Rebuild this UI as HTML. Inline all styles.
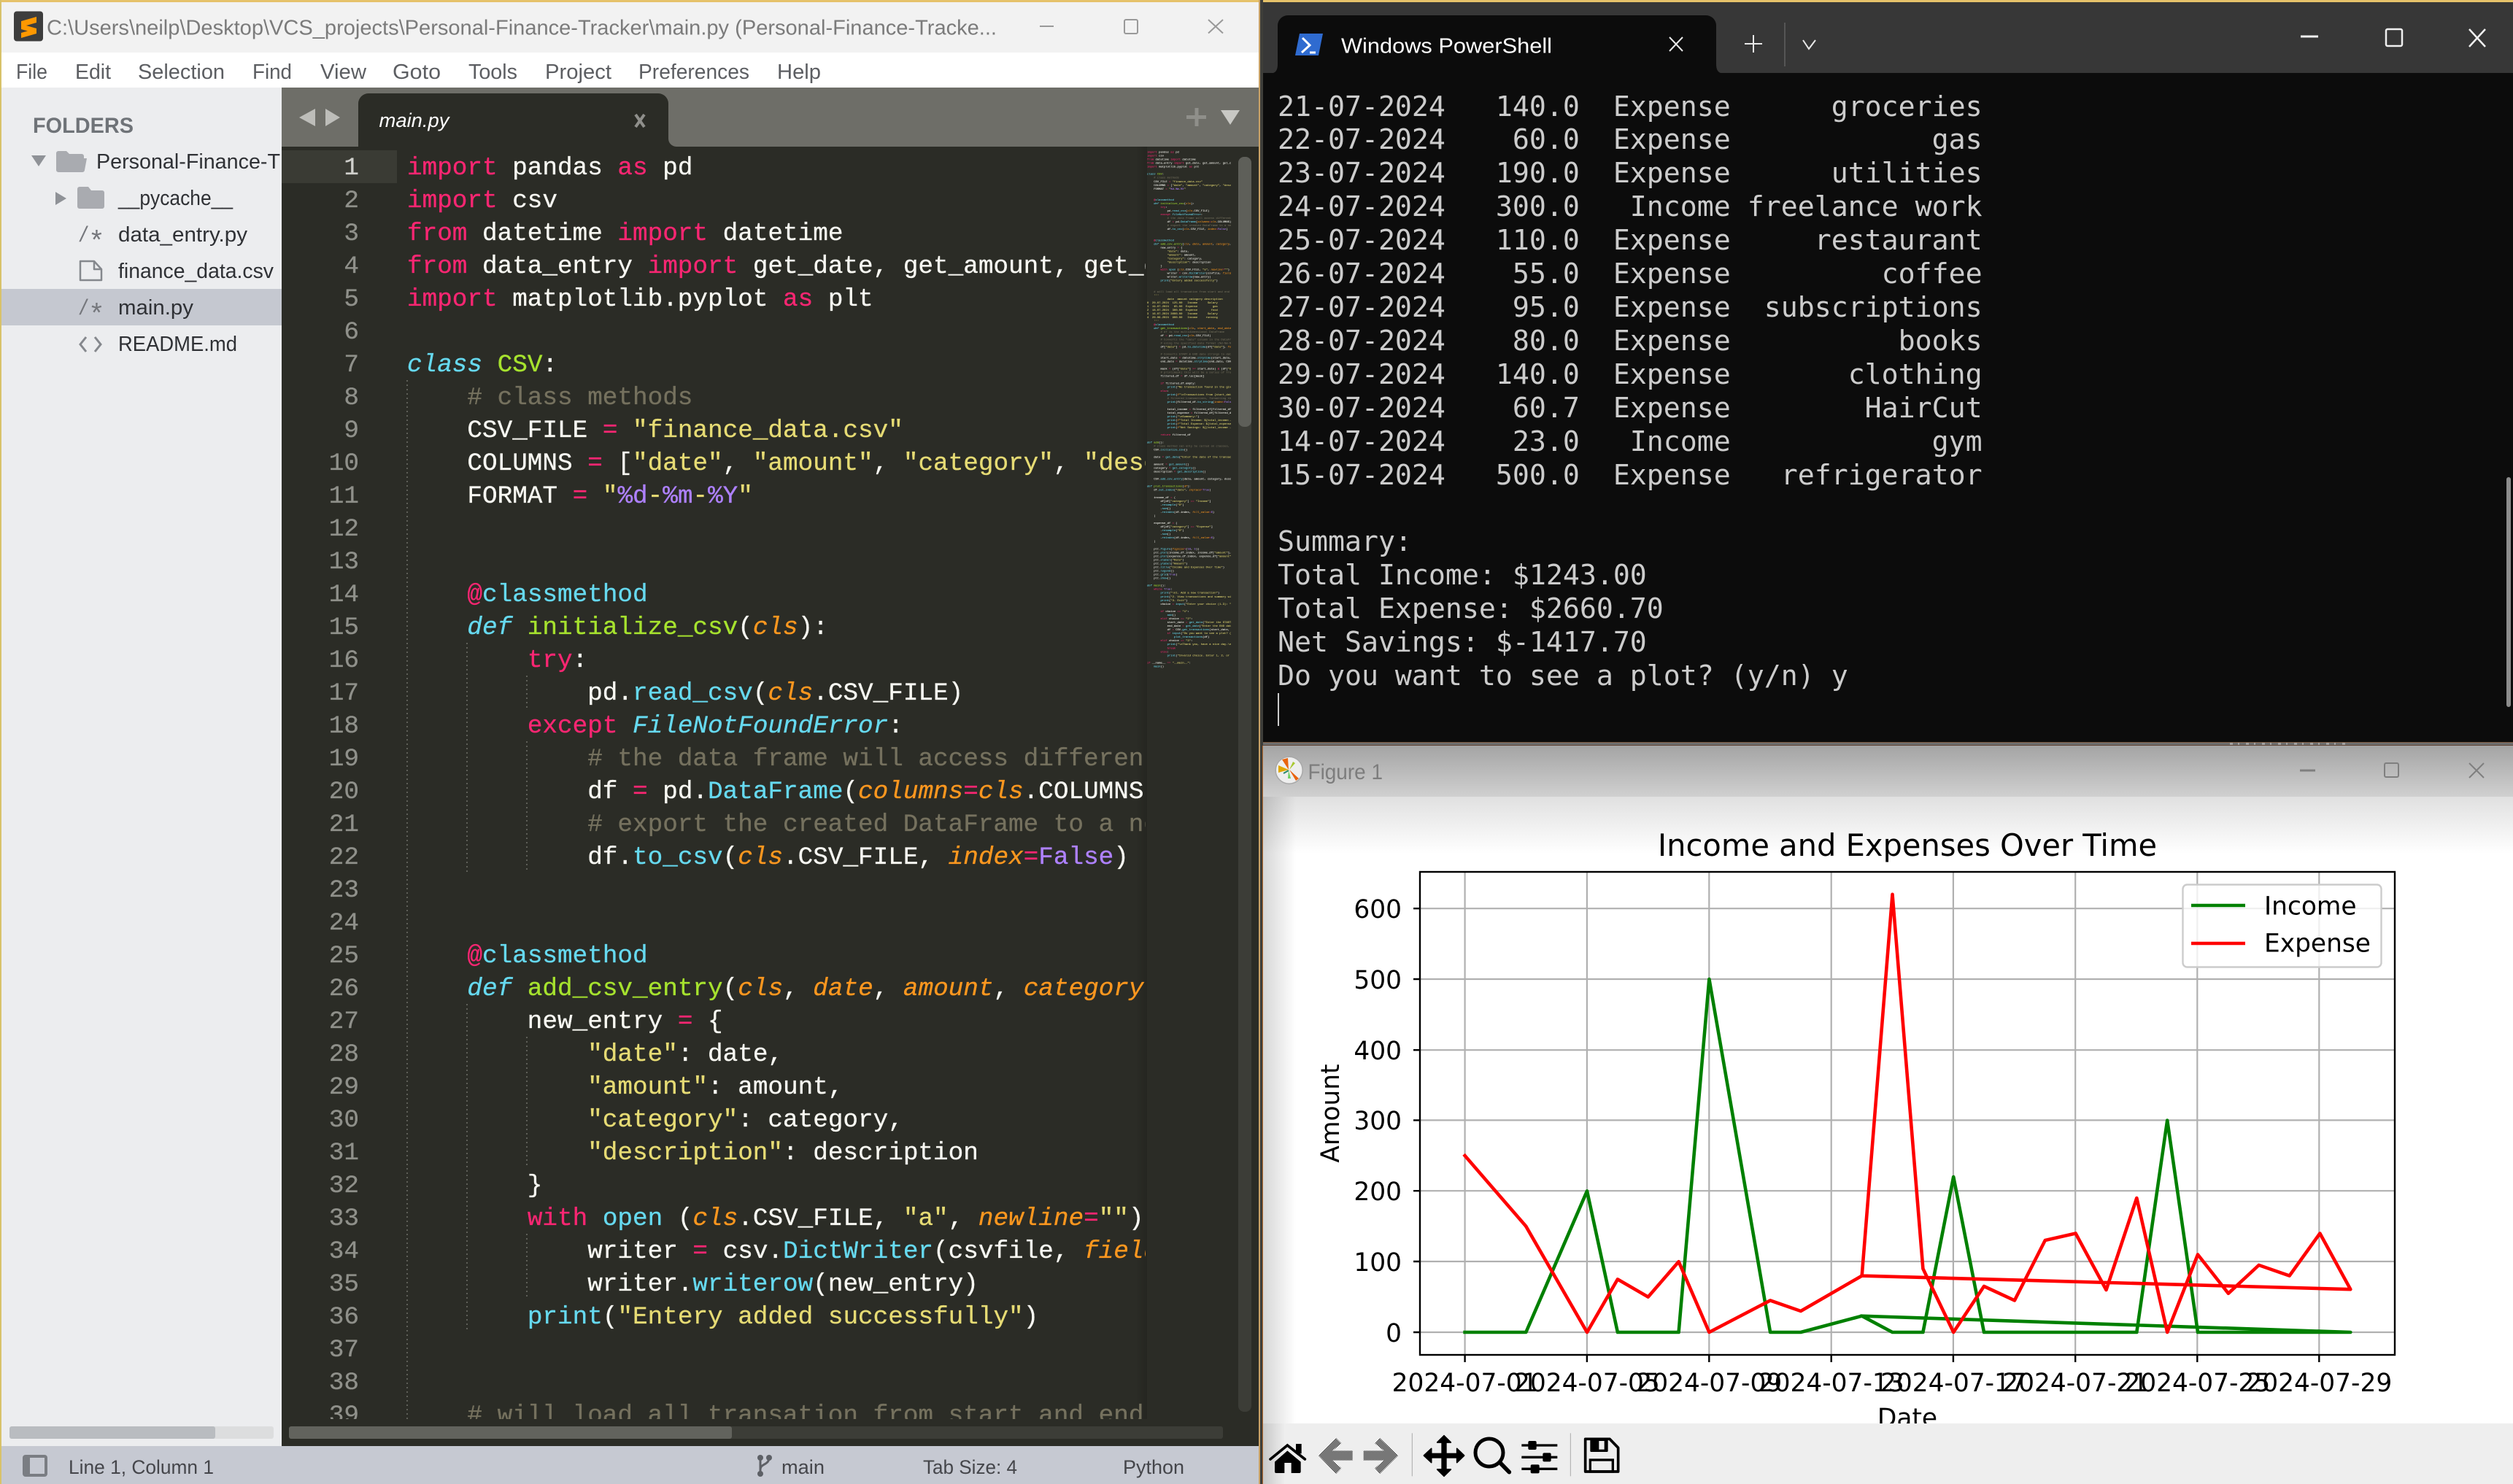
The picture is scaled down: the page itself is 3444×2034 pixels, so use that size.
<!DOCTYPE html>
<html lang="en"><head><meta charset="utf-8"><title>Screenshot</title>
<style>
html,body{margin:0;padding:0;width:3444px;height:2034px;overflow:hidden;background:#333}
svg.base{position:absolute;left:0;top:0}
.ui{font-family:"Liberation Sans",sans-serif}
.mpl{font-family:"DejaVu Sans",sans-serif;font-size:34.4px;fill:#000}
pre{margin:0;font-family:"Liberation Mono",monospace}
.clip{position:absolute;overflow:hidden}
.code{font-size:34.33px;line-height:45px;color:#f8f8f2;white-space:pre;-webkit-text-stroke:.3px currentColor}
.code i{font-style:normal}
.k{color:#f92672}.s{color:#e6db74}.c{color:#75715e}.f{color:#66d9ef}
.code i.fi{color:#66d9ef;font-style:italic}.g{color:#a6e22e}
.code i.a{color:#fd971f;font-style:italic}.n{color:#ae81ff}
.gut{font-size:34.33px;line-height:45px;color:#8f908a;text-align:right;-webkit-text-stroke:.3px currentColor}
.term{font-family:"DejaVu Sans Mono",monospace;font-size:38.2px;line-height:45.92px;color:#cccccc;white-space:pre}
</style></head><body>
<svg class="base" width="3444" height="2034" viewBox="0 0 3444 2034" xmlns="http://www.w3.org/2000/svg">
<defs>
<linearGradient id="ftb" x1="0" y1="0" x2="0" y2="1"><stop offset="0" stop-color="#a4a4a4"/><stop offset="1" stop-color="#d0d0d0"/></linearGradient>
<linearGradient id="fct" x1="0" y1="0" x2="0" y2="1"><stop offset="0" stop-color="#e0e0e0"/><stop offset="1" stop-color="#ffffff"/></linearGradient>
<linearGradient id="fleft" x1="0" y1="0" x2="1" y2="0"><stop offset="0" stop-color="#000" stop-opacity=".16"/><stop offset="1" stop-color="#000" stop-opacity="0"/></linearGradient>
<linearGradient id="mshadow" x1="0" y1="0" x2="1" y2="0"><stop offset="0" stop-color="#000" stop-opacity="0"/><stop offset="1" stop-color="#000" stop-opacity=".14"/></linearGradient>
<pattern id="dither" width="6" height="6" patternUnits="userSpaceOnUse"><rect width="3" height="3" fill="#000"/><rect x="3" y="3" width="3" height="3" fill="#000"/></pattern>
<clipPath id="axclip"><rect x="1946" y="1195" width="1336" height="662"/></clipPath>
</defs>

<!-- window frame background -->
<rect width="3444" height="2034" fill="#3a3a36"/>
<rect x="0" y="0" width="3444" height="3" fill="#e6c26a"/>

<!-- SUBLIME WINDOW -->
<rect x="0" y="0" width="2" height="2034" fill="#d8c26a"/>
<rect x="2" y="3" width="1723" height="69" fill="#f2f2f2"/>
<rect x="2" y="72" width="1723" height="48" fill="#ffffff"/>
<rect x="2" y="120" width="384" height="1862" fill="#ecedef"/>
<rect x="386" y="120" width="1339" height="81" fill="#6e6e68"/>
<rect x="386" y="201" width="1339" height="1781" fill="#2b2c26"/>
<rect x="2" y="1982" width="1723" height="52" fill="#c6c9d2"/>
<rect x="1725" y="0" width="2" height="2034" fill="#c9a266"/>

<!-- Sublime icon -->
<rect x="19" y="15.5" width="40" height="41" rx="4" fill="#3d3d3d"/>
<path d="M29,29 L50,23 V31 L29,37 Z M29,33 L50,39 V46 L29,40 Z M29,45 L50,39 V46 L29,52 Z" fill="#ff9800"/>
<text class="ui" x="64" y="47.5" font-size="29" fill="#7b7b7b" textLength="1302" lengthAdjust="spacingAndGlyphs">C:\Users\neilp\Desktop\VCS_projects\Personal-Finance-Tracker\main.py (Personal-Finance-Tracke...</text>
<path d="M1425,36 H1444" stroke="#999" stroke-width="2"/>
<rect x="1541" y="27" width="18" height="19" rx="2" fill="none" stroke="#999" stroke-width="2"/>
<path d="M1656,27 L1676,45.5 M1676,27 L1656,45.5" stroke="#999" stroke-width="2"/>

<!-- Menu -->
<g class="ui" font-size="29" fill="#5c5e62">
<text x="22" y="108" textLength="43" lengthAdjust="spacingAndGlyphs">File</text>
<text x="103" y="108" textLength="49" lengthAdjust="spacingAndGlyphs">Edit</text>
<text x="189" y="108" textLength="119" lengthAdjust="spacingAndGlyphs">Selection</text>
<text x="346" y="108" textLength="54" lengthAdjust="spacingAndGlyphs">Find</text>
<text x="439" y="108" textLength="63" lengthAdjust="spacingAndGlyphs">View</text>
<text x="538" y="108" textLength="66" lengthAdjust="spacingAndGlyphs">Goto</text>
<text x="642" y="108" textLength="67" lengthAdjust="spacingAndGlyphs">Tools</text>
<text x="747" y="108" textLength="91" lengthAdjust="spacingAndGlyphs">Project</text>
<text x="875" y="108" textLength="152" lengthAdjust="spacingAndGlyphs">Preferences</text>
<text x="1065" y="108" textLength="60" lengthAdjust="spacingAndGlyphs">Help</text>
</g>

<!-- Sidebar -->
<rect x="2" y="396" width="384" height="50" fill="#c5c8d0"/>
<text class="ui" x="45" y="182" font-size="30" font-weight="bold" fill="#6f7378" textLength="138" lengthAdjust="spacingAndGlyphs">FOLDERS</text>
<g class="ui" font-size="29" fill="#2f3135">
<text x="132" y="231" textLength="252" lengthAdjust="spacingAndGlyphs">Personal-Finance-T</text>
<text x="162" y="281" textLength="157" lengthAdjust="spacingAndGlyphs">__pycache__</text>
<text x="162" y="331" textLength="177" lengthAdjust="spacingAndGlyphs">data_entry.py</text>
<text x="162" y="381" textLength="213" lengthAdjust="spacingAndGlyphs">finance_data.csv</text>
<text x="162" y="431" textLength="103" lengthAdjust="spacingAndGlyphs">main.py</text>
<text x="162" y="481" textLength="163" lengthAdjust="spacingAndGlyphs">README.md</text>
</g>
<path d="M43,213 H63 L53,228 Z" fill="#8f9297"/>
<path d="M77,210 a3,3 0 0 1 3,-3 h11 l4,4 h17 a3,3 0 0 1 3,3 v3 h4 l-3,16 a3,3 0 0 1 -3,3 h-33 a3,3 0 0 1 -3,-3 Z" fill="#a9abb0"/>
<path d="M76,263 L91,272 L76,281 Z" fill="#8f9297"/>
<path d="M106,259 a3,3 0 0 1 3,-3 h12 l4,5 h15 a3,3 0 0 1 3,3 v19 a3,3 0 0 1 -3,3 h-31 a3,3 0 0 1 -3,-3 Z" fill="#a9abb0"/>
<g class="ui" fill="#75777c">
<text x="110" y="331" font-size="30" font-style="italic">/</text><text x="125" y="341" font-size="38">*</text>
<text x="110" y="431" font-size="30" font-style="italic">/</text><text x="125" y="441" font-size="38">*</text>
</g>
<path d="M110,358 H129 L139,369 V384 H110 Z M129,358 V369 H139" fill="none" stroke="#85888d" stroke-width="2.5" stroke-linejoin="round"/>
<path d="M118,462 L110,472 L118,482 M130,462 L138,472 L130,482" fill="none" stroke="#85888d" stroke-width="3"/>

<!-- Tab bar -->
<path d="M491,201 V142 a14,14 0 0 1 14,-14 H902 a14,14 0 0 1 14,14 V190 a11,11 0 0 0 11,11 Z" fill="#2b2c26"/>
<path d="M432,149 V173 L410,161 Z M446,149 V173 L466,161 Z" fill="#bdbdb9"/>
<text class="ui" x="519.5" y="174" font-size="27" font-style="italic" fill="#ffffff" textLength="96" lengthAdjust="spacingAndGlyphs">main.py</text>
<path d="M871,157 L883,174 M883,157 L871,174" stroke="#8f8f8b" stroke-width="4"/>
<path d="M1640,148 V173 M1626,160.5 H1653" stroke="#8f8f8a" stroke-width="5"/>
<path d="M1673,151 H1699 L1686,171 Z" fill="#c8c8c4"/>

<!-- Editor pieces -->
<rect x="386" y="206" width="158" height="45" fill="#3a3b34"/>
<g stroke="#5e5f58" stroke-width="2" stroke-dasharray="2 4" fill="none">
<path d="M558,521 V1945"/>
<path d="M640,881 V1196 M640,1376 V1826"/>
<path d="M722,926 V971 M722,1016 V1196 M722,1421 V1601 M722,1691 V1781"/>
</g>
<rect x="1556" y="201" width="16" height="1744" fill="url(#mshadow)"/>
<rect x="1697" y="215" width="18" height="1720" rx="8" fill="#3c3d37"/>
<rect x="1697" y="215" width="18" height="370" rx="8" fill="#5e5f59"/>
<rect x="13" y="1955" width="362" height="17" rx="3" fill="#dcddde"/>
<rect x="13" y="1955" width="282" height="17" rx="3" fill="#b9bcc0"/>
<rect x="396" y="1955" width="1280" height="17" rx="3" fill="#3c3d37"/>
<rect x="396" y="1955" width="607" height="17" rx="3" fill="#62635d"/>

<!-- Status bar -->
<rect x="31" y="1994" width="34" height="30" rx="4" fill="#7a7d83"/>
<rect x="41" y="1998" width="20" height="22" fill="#c6c9d2"/>
<g class="ui" font-size="27" fill="#45464b">
<text x="94" y="2020" textLength="199" lengthAdjust="spacingAndGlyphs">Line 1, Column 1</text>
<text x="1071" y="2020" textLength="59" lengthAdjust="spacingAndGlyphs">main</text>
<text x="1265" y="2020" textLength="129" lengthAdjust="spacingAndGlyphs">Tab Size: 4</text>
<text x="1539" y="2020" textLength="84" lengthAdjust="spacingAndGlyphs">Python</text>
</g>
<g fill="#5d6066"><circle cx="1042" cy="1998" r="4"/><circle cx="1042" cy="2020" r="4"/><circle cx="1054" cy="1998" r="4"/></g>
<path d="M1042,1998 V2020 M1054,1998 C1054,2008 1042,2006 1042,2014" stroke="#5d6066" stroke-width="3" fill="none"/>

<!-- TERMINAL WINDOW -->
<rect x="1727" y="0" width="4" height="2034" fill="#3e3e3a"/>
<rect x="1731" y="3" width="1713" height="97" fill="#373737"/>
<rect x="1731" y="100" width="1713" height="917" fill="#0c0c0c"/>
<path d="M1745,100 Q1751,98 1751,88 V35 a14,14 0 0 1 14,-14 H2338 a14,14 0 0 1 14,14 V88 Q2352,98 2358,100 Z" fill="#0c0c0c"/>
<path d="M1781,46 H1813 L1807,76 H1775 Z" fill="#2f6bd0"/>
<path d="M1785,52 L1795,62 L1784,72 M1795,72 H1803" fill="none" stroke="#fff" stroke-width="3"/>
<text class="ui" x="1838" y="72.5" font-size="29" fill="#ffffff" textLength="289" lengthAdjust="spacingAndGlyphs">Windows PowerShell</text>
<path d="M2288,51 L2306,70 M2306,51 L2288,70" stroke="#e8e8e8" stroke-width="2"/>
<path d="M2403,48 V72 M2391,60 H2415" stroke="#e8e8e8" stroke-width="2"/>
<path d="M2446,31 V91" stroke="#555" stroke-width="2"/>
<path d="M2471,55 L2479,67 L2488,55" fill="none" stroke="#e8e8e8" stroke-width="2"/>
<path d="M3153,50 H3177" stroke="#f0f0f0" stroke-width="3"/>
<rect x="3270" y="40" width="22" height="23" rx="2" fill="none" stroke="#f0f0f0" stroke-width="2.5"/>
<path d="M3384,40 L3406,64 M3406,40 L3384,64" stroke="#f0f0f0" stroke-width="2.5"/>
<rect x="3435" y="654" width="6" height="315" rx="3" fill="#8c8c8c"/>
<rect x="1751" y="950" width="2" height="45" fill="#cccccc"/>
<rect x="1731" y="1017" width="1713" height="1" fill="#7b5a42"/>
<rect x="1731" y="1018" width="1713" height="3" fill="#6e6e6e"/>
<rect x="1731" y="1021" width="1713" height="1" fill="#5e4233"/>
<path d="M3056,1019.5 H3215" stroke="#ccc" stroke-opacity=".55" stroke-width="3" stroke-dasharray="4 7 2 9"/>
<rect x="1730" y="1022" width="1" height="1012" fill="#b06a30"/>

<!-- FIGURE WINDOW -->
<rect x="1731" y="1022" width="1713" height="70" fill="url(#ftb)"/>
<rect x="1731" y="1092" width="1713" height="78" fill="url(#fct)"/>
<rect x="1731" y="1170" width="1713" height="781" fill="#ffffff"/>
<rect x="1731" y="1092" width="45" height="942" fill="url(#fleft)"/>

<circle cx="1766.7" cy="1055.7" r="18.5" fill="#eeeeee" stroke="#a8a8a8" stroke-width="1.5"/>
<path d="M1766,1055 L1757,1041 L1765,1039 Z M1767,1055 L1780,1067 L1776,1070 Z" fill="#e8640f"/>
<path d="M1766,1055 L1752,1049 L1752,1059 Z" fill="#e0a800"/>
<path d="M1767,1055 L1772,1044 L1775,1046 Z" fill="#a8c830"/>
<path d="M1766,1056 L1765,1067 L1769,1067 Z" fill="#70d060"/>
<path d="M1766,1056 L1759,1060" stroke="#2a8a6a" stroke-width="2"/>
<text class="ui" x="1792.5" y="1068" font-size="30" fill="#7d7d7d" textLength="102.5" lengthAdjust="spacingAndGlyphs">Figure 1</text>
<path d="M3152,1056 H3173" stroke="#7f7f7f" stroke-width="3"/>
<rect x="3268" y="1046" width="19" height="19" rx="2" fill="none" stroke="#7f7f7f" stroke-width="2"/>
<path d="M3384,1046 L3404,1066 M3404,1046 L3384,1066" stroke="#7f7f7f" stroke-width="2"/>

<!-- Plot -->
<text class="mpl" x="2614" y="1173" text-anchor="middle" style="font-size:41.6px">Income and Expenses Over Time</text>
<g clip-path="url(#axclip)">
<g stroke="#b0b0b0" stroke-width="2.2" fill="none">
<path d="M2007.6,1195 V1857 M2174.9,1195 V1857 M2342.3,1195 V1857 M2509.7,1195 V1857 M2676.9,1195 V1857 M2844.2,1195 V1857 M3011.3,1195 V1857 M3178.3,1195 V1857"/>
<path d="M1946,1245.2 H3282 M1946,1342 H3282 M1946,1439.2 H3282 M1946,1535.4 H3282 M1946,1632.2 H3282 M1946,1729 H3282 M1946,1826 H3282"/>
</g>
<polyline fill="none" stroke="#008000" stroke-width="4.6" stroke-linejoin="round" stroke-linecap="square" points="2007.6,1826 2091.3,1826 2175,1632.4 2216.9,1826 2300.6,1826 2342.4,1342 2426.1,1826 2467.9,1826 2551.7,1803.7 2593.5,1826 2635.4,1826 2677.2,1613 2719,1826 2928.3,1826 2970.2,1535.6 3012,1826 3221.3,1826 2551.7,1803.7"/>
<polyline fill="none" stroke="#ff0000" stroke-width="4.6" stroke-linejoin="round" stroke-linecap="square" points="2007.6,1584 2091.3,1680.8 2175,1826 2216.9,1753.4 2258.7,1777.6 2300.6,1729.2 2342.4,1826 2426.1,1782.4 2467.9,1797 2551.7,1748.6 2593.5,1225.8 2635.4,1738.9 2677.2,1826 2719,1763 2760.9,1782.4 2802.8,1700 2844.6,1690.5 2886.5,1768 2928.3,1642 2970.2,1826 3012,1719.5 3053.9,1772.8 3095.7,1734 3137.6,1748.6 3179.4,1690.5 3221.3,1767.2 2551.7,1748.6"/>
</g>
<rect x="1946" y="1195" width="1336" height="662" fill="none" stroke="#000" stroke-width="2.4"/>
<g stroke="#000" stroke-width="2.4">
<path d="M1937,1245.2 H1946 M1937,1342 H1946 M1937,1439.2 H1946 M1937,1535.4 H1946 M1937,1632.2 H1946 M1937,1729 H1946 M1937,1826 H1946"/>
<path d="M2007.6,1857 V1867 M2174.9,1857 V1867 M2342.3,1857 V1867 M2509.7,1857 V1867 M2676.9,1857 V1867 M2844.2,1857 V1867 M3011.3,1857 V1867 M3178.3,1857 V1867"/>
</g>
<g class="mpl" text-anchor="end">
<text x="1921" y="1258">600</text><text x="1921" y="1355">500</text><text x="1921" y="1452">400</text><text x="1921" y="1548">300</text><text x="1921" y="1645">200</text><text x="1921" y="1742">100</text><text x="1921" y="1839">0</text>
</g>
<g class="mpl" text-anchor="middle">
<text x="2007.6" y="1907">2024-07-01</text><text x="2174.9" y="1907">2024-07-05</text><text x="2342.3" y="1907">2024-07-09</text><text x="2509.7" y="1907">2024-07-13</text><text x="2676.9" y="1907">2024-07-17</text><text x="2844.2" y="1907">2024-07-21</text><text x="3011.3" y="1907">2024-07-25</text><text x="3178.3" y="1907">2024-07-29</text>
<text x="2614" y="1955">Date</text>
<text transform="translate(1835,1526) rotate(-90)">Amount</text>
</g>
<rect x="2991.5" y="1212.5" width="272" height="113" rx="6" fill="#ffffff" fill-opacity=".8" stroke="#cccccc" stroke-width="2.4"/>
<path d="M3003,1241 H3077" stroke="#008000" stroke-width="4.6"/>
<path d="M3003,1293 H3077" stroke="#ff0000" stroke-width="4.6"/>
<text class="mpl" x="3103" y="1253.5">Income</text>
<text class="mpl" x="3103" y="1304.5">Expense</text>

<!-- Toolbar -->
<rect x="1731" y="1951" width="1713" height="83" fill="#eeeeee"/>
<rect x="1731" y="1951" width="30" height="83" fill="url(#fleft)"/>
<g transform="translate(1731,1955) scale(.33333)">
<path d="M30,135 L100,78 L172,135" fill="none" stroke="#000" stroke-width="11" stroke-linecap="round"/>
<path d="M100,100 L155,146 V186 a6,6 0 0 1 -6,6 H116 V150 H88 V192 H54 a6,6 0 0 1 -6,-6 V146 Z" fill="#000"/>
<rect x="135" y="72" width="23" height="40" fill="#000"/>
<path d="M228,120 L300,48 L322,70 L285,100 H368 V140 H285 L322,172 L300,195 Z" fill="url(#dither)"/>
<path d="M555,120 L480,48 L460,70 L497,100 H413 V140 H497 L460,172 L480,195 Z" fill="url(#dither)"/>
<path d="M613,28 V205" stroke="#aaa" stroke-width="3"/>
<g fill="#000" stroke="#000" stroke-width="5" stroke-linejoin="round">
<path d="M744,38 L772,66 H716 Z"/><path d="M744,205 L772,177 H716 Z"/><path d="M661,120 L692,91 V149 Z"/><path d="M827,120 L797,91 V149 Z"/>
</g>
<rect x="733" y="60" width="22" height="125" fill="#000"/><rect x="685" y="110" width="120" height="21" fill="#000"/>
<circle cx="930" cy="108" r="57" fill="none" stroke="#000" stroke-width="15"/>
<path d="M975,150 L1012,188" stroke="#000" stroke-width="17" stroke-linecap="round"/>
<g stroke="#000" stroke-width="10"><path d="M1063,78 H1210 M1063,127 H1210 M1063,175 H1210"/></g>
<g fill="#000"><rect x="1090" y="60" width="34" height="36" rx="6"/><rect x="1150" y="109" width="34" height="36" rx="6"/><rect x="1100" y="157" width="36" height="36" rx="6"/></g>
<path d="M1264,28 V205" stroke="#aaa" stroke-width="3"/>
<path d="M1325,52 H1425 L1460,88 V186 H1325 Z" fill="none" stroke="#000" stroke-width="11" stroke-linejoin="round"/>
<rect x="1345" y="52" width="73" height="53" rx="4" fill="#000"/><rect x="1381" y="60" width="22" height="35" fill="#eee"/>
<rect x="1345" y="138" width="93" height="48" fill="none" stroke="#000" stroke-width="10"/>
</g>
</svg>

<!-- Gutter -->
<div class="clip" style="left:386px;top:208px;width:106px;height:1737px"><pre class="gut"><span style="color:#d0d0cc">1</span>
2
3
4
5
6
7
8
9
10
11
12
13
14
15
16
17
18
19
20
21
22
23
24
25
26
27
28
29
30
31
32
33
34
35
36
37
38
39</pre></div>

<!-- Code -->
<div class="clip" style="left:558px;top:208px;width:1012px;height:1737px"><pre class="code"><i class=k>import</i> pandas <i class=k>as</i> pd
<i class=k>import</i> csv
<i class=k>from</i> datetime <i class=k>import</i> datetime
<i class=k>from</i> data_entry <i class=k>import</i> get_date, get_amount, get_category, get_description
<i class=k>import</i> matplotlib.pyplot <i class=k>as</i> plt

<i class=fi>class</i> <i class=g>CSV</i>:
    <i class=c># class methods</i>
    CSV_FILE <i class=k>=</i> <i class=s>"finance_data.csv"</i>
    COLUMNS <i class=k>=</i> [<i class=s>"date"</i>, <i class=s>"amount"</i>, <i class=s>"category"</i>, <i class=s>"description"</i>]
    FORMAT <i class=k>=</i> <i class=s>"</i><i class=n>%d</i><i class=s>-</i><i class=n>%m</i><i class=s>-</i><i class=n>%Y</i><i class=s>"</i>


    <i class=k>@</i><i class=f>classmethod</i>
    <i class=fi>def</i> <i class=g>initialize_csv</i>(<i class=a>cls</i>):
        <i class=k>try</i>:
            pd.<i class=f>read_csv</i>(<i class=a>cls</i>.CSV_FILE)
        <i class=k>except</i> <i class=fi>FileNotFoundError</i>:
            <i class=c># the data frame will access different columns</i>
            df <i class=k>=</i> pd.<i class=f>DataFrame</i>(<i class=a>columns</i><i class=k>=</i><i class=a>cls</i>.COLUMNS)
            <i class=c># export the created DataFrame to a new csv</i>
            df.<i class=f>to_csv</i>(<i class=a>cls</i>.CSV_FILE, <i class=a>index</i><i class=k>=</i><i class=n>False</i>)


    <i class=k>@</i><i class=f>classmethod</i>
    <i class=fi>def</i> <i class=g>add_csv_entry</i>(<i class=a>cls</i>, <i class=a>date</i>, <i class=a>amount</i>, <i class=a>category</i>, <i class=a>description</i>):
        new_entry <i class=k>=</i> {
            <i class=s>"date"</i>: date,
            <i class=s>"amount"</i>: amount,
            <i class=s>"category"</i>: category,
            <i class=s>"description"</i>: description
        }
        <i class=k>with</i> <i class=f>open</i> (<i class=a>cls</i>.CSV_FILE, <i class=s>"a"</i>, <i class=a>newline</i><i class=k>=</i><i class=s>""</i>) <i class=k>as</i> csvfile:
            writer <i class=k>=</i> csv.<i class=f>DictWriter</i>(csvfile, <i class=a>fieldnames</i><i class=k>=</i><i class=a>cls</i>.COLUMNS)
            writer.<i class=f>writerow</i>(new_entry)
        <i class=f>print</i>(<i class=s>"Entery added successfully"</i>)


    <i class=c># will load all transation from start and end date</i></pre></div>

<!-- Minimap -->
<div class="clip" style="left:1572px;top:206px;width:115px;height:720px"><pre class="code" style="transform:scale(.1119);transform-origin:0 0"><i class=k>import</i> pandas <i class=k>as</i> pd
<i class=k>import</i> csv
<i class=k>from</i> datetime <i class=k>import</i> datetime
<i class=k>from</i> data_entry <i class=k>import</i> get_date, get_amount, get_category, get_description
<i class=k>import</i> matplotlib.pyplot <i class=k>as</i> plt

<i class=fi>class</i> <i class=g>CSV</i>:
    <i class=c># class methods</i>
    CSV_FILE <i class=k>=</i> <i class=s>"finance_data.csv"</i>
    COLUMNS <i class=k>=</i> [<i class=s>"date"</i>, <i class=s>"amount"</i>, <i class=s>"category"</i>, <i class=s>"description"</i>]
    FORMAT <i class=k>=</i> <i class=s>"</i><i class=n>%d</i><i class=s>-</i><i class=n>%m</i><i class=s>-</i><i class=n>%Y</i><i class=s>"</i>


    <i class=k>@</i><i class=f>classmethod</i>
    <i class=fi>def</i> <i class=g>initialize_csv</i>(<i class=a>cls</i>):
        <i class=k>try</i>:
            pd.<i class=f>read_csv</i>(<i class=a>cls</i>.CSV_FILE)
        <i class=k>except</i> <i class=fi>FileNotFoundError</i>:
            <i class=c># the data frame will access different columns</i>
            df <i class=k>=</i> pd.<i class=f>DataFrame</i>(<i class=a>columns</i><i class=k>=</i><i class=a>cls</i>.COLUMNS)
            <i class=c># export the created DataFrame to a new csv</i>
            df.<i class=f>to_csv</i>(<i class=a>cls</i>.CSV_FILE, <i class=a>index</i><i class=k>=</i><i class=n>False</i>)


    <i class=k>@</i><i class=f>classmethod</i>
    <i class=fi>def</i> <i class=g>add_csv_entry</i>(<i class=a>cls</i>, <i class=a>date</i>, <i class=a>amount</i>, <i class=a>category</i>, <i class=a>description</i>):
        new_entry <i class=k>=</i> {
            <i class=s>"date"</i>: date,
            <i class=s>"amount"</i>: amount,
            <i class=s>"category"</i>: category,
            <i class=s>"description"</i>: description
        }
        <i class=k>with</i> <i class=f>open</i> (<i class=a>cls</i>.CSV_FILE, <i class=s>"a"</i>, <i class=a>newline</i><i class=k>=</i><i class=s>""</i>) <i class=k>as</i> csvfile:
            writer <i class=k>=</i> csv.<i class=f>DictWriter</i>(csvfile, <i class=a>fieldnames</i><i class=k>=</i><i class=a>cls</i>.COLUMNS)
            writer.<i class=f>writerow</i>(new_entry)
        <i class=f>print</i>(<i class=s>"Entery added successfully"</i>)


    <i class=c># will load all transation from start and end date</i>
    <i class=s>'''</i>
<i class=s>            date  amount category description</i>
<i class=s>0  20-07-2024  125.00   Income      Salary</i>
<i class=s>1  19-07-2024   65.00  Expense         gas</i>
<i class=s>2  18-07-2024  300.00  Expense        food</i>
<i class=s>3  16-07-2024 3000.00   Income      Salary</i>
<i class=s>4  20-06-2024  900.00   Income     running</i>
    <i class=s>'''</i>
    <i class=k>@</i><i class=f>classmethod</i>
    <i class=fi>def</i> <i class=g>get_transactions</i>(<i class=a>cls</i>, <i class=a>start_date</i>, <i class=a>end_date</i>):
        <i class=c># df is the multidimensional DataFrame</i>
        df <i class=k>=</i> pd.<i class=f>read_csv</i>(<i class=a>cls</i>.CSV_FILE)
        <i class=c># Converts the "date" column in the DataFrame</i>
        <i class=c># using the specified date format (%d-%m-%Y)</i>
        df[<i class=s>"date"</i>] <i class=k>=</i> pd.<i class=f>to_datetime</i>(df[<i class=s>"date"</i>], <i class=a>format</i><i class=k>=</i>CSV.FORMAT)

        <i class=c># Converts START &amp; END date strings to datetime</i>
        start_date <i class=k>=</i> datetime.<i class=f>strptime</i>(start_date, CSV.FORMAT)
        end_date <i class=k>=</i> datetime.<i class=f>strptime</i>(end_date, CSV.FORMAT)

        mask <i class=k>=</i> (df[<i class=s>"date"</i>] <i class=k>&gt;=</i> start_date) <i class=k>&amp;</i> (df[<i class=s>"date"</i>] <i class=k>&lt;=</i> end_date)
        <i class=c># print(mask) this will be a series of True/False</i>
        filtered_df <i class=k>=</i> df.loc[mask]

        <i class=k>if</i> filtered_df.empty:
            <i class=f>print</i>(<i class=s>"No transaction found in the given date range"</i>)
        <i class=k>else</i>:
            <i class=f>print</i>(<i class=a>f</i><i class=s>"\nTransactions from {start_date} to {end_date}"</i>)
            <i class=c># filtered transactions, formatting the date column</i>
            <i class=f>print</i>(filtered_df.<i class=f>to_string</i>(<i class=a>index</i><i class=k>=</i><i class=n>False</i>, <i class=a>formatters</i><i class=k>=</i>{}))

            total_income <i class=k>=</i> filtered_df[filtered_df[<i class=s>"category"</i>] <i class=k>==</i> <i class=s>"Income"</i>]
            total_expense <i class=k>=</i> filtered_df[filtered_df[<i class=s>"category"</i>] <i class=k>==</i> <i class=s>"Expense"</i>]
            <i class=f>print</i>(<i class=s>"\nSummary:"</i>)
            <i class=f>print</i>(<i class=a>f</i><i class=s>"Total Income: ${total_income:.2f}"</i>)
            <i class=f>print</i>(<i class=a>f</i><i class=s>"Total Expense: ${total_expense:.2f}"</i>)
            <i class=f>print</i>(<i class=a>f</i><i class=s>"Net Savings: ${(total_income - total_expense):.2f}"</i>)

        <i class=k>return</i> filtered_df

<i class=fi>def</i> <i class=g>add</i>():
    <i class=c># class method can only be called on classes, not instances</i>
    CSV.<i class=f>initialize_csv</i>()

    date <i class=k>=</i> <i class=f>get_date</i>(<i class=s>"Enter the date of the transaction (dd-mm-yyyy)"</i>)

    amount <i class=k>=</i> <i class=f>get_amount</i>()
    category <i class=k>=</i> <i class=f>get_category</i>()
    description <i class=k>=</i> <i class=f>get_description</i>()

    CSV.<i class=f>add_csv_entry</i>(date, amount, category, description)

<i class=fi>def</i> <i class=g>plot_transactions</i>(<i class=a>df</i>):
    df.<i class=f>set_index</i>(<i class=s>"date"</i>, <i class=a>inplace</i><i class=k>=</i><i class=n>True</i>)

    income_df <i class=k>=</i> (
        df[df[<i class=s>"category"</i>] <i class=k>==</i> <i class=s>"Income"</i>]
        .<i class=f>resample</i>(<i class=s>"D"</i>)
        .<i class=f>sum</i>()
        .<i class=f>reindex</i>(df.index, <i class=a>fill_value</i><i class=k>=</i><i class=n>0</i>)
    )

    expense_df <i class=k>=</i> (
        df[df[<i class=s>"category"</i>] <i class=k>==</i> <i class=s>"Expense"</i>]
        .<i class=f>resample</i>(<i class=s>"D"</i>)
        .<i class=f>sum</i>()
        .<i class=f>reindex</i>(df.index, <i class=a>fill_value</i><i class=k>=</i><i class=n>0</i>)
    )

    plt.<i class=f>figure</i>(<i class=a>figsize</i><i class=k>=</i>(<i class=n>10</i>, <i class=n>5</i>))
    plt.<i class=f>plot</i>(income_df.index, income_df[<i class=s>"amount"</i>], <i class=a>label</i><i class=k>=</i><i class=s>"Income"</i>, <i class=a>color</i><i class=k>=</i><i class=s>"g"</i>)
    plt.<i class=f>plot</i>(expense_df.index, expense_df[<i class=s>"amount"</i>], <i class=a>label</i><i class=k>=</i><i class=s>"Expense"</i>, <i class=a>color</i><i class=k>=</i><i class=s>"r"</i>)
    plt.<i class=f>xlabel</i>(<i class=s>"Date"</i>)
    plt.<i class=f>ylabel</i>(<i class=s>"Amount"</i>)
    plt.<i class=f>title</i>(<i class=s>"Income and Expenses Over Time"</i>)
    plt.<i class=f>legend</i>()
    plt.<i class=f>grid</i>(<i class=n>True</i>)
    plt.<i class=f>show</i>()

<i class=fi>def</i> <i class=g>main</i>():
    <i class=k>while</i> <i class=n>True</i>:
        <i class=f>print</i>(<i class=s>"\n1. Add a new transaction"</i>)
        <i class=f>print</i>(<i class=s>"2. View transactions and summary within a date range"</i>)
        <i class=f>print</i>(<i class=s>"3. Exit"</i>)
        choice <i class=k>=</i> <i class=f>input</i>(<i class=s>"Enter your choice (1-3): "</i>)

        <i class=k>if</i> choice <i class=k>==</i> <i class=s>"1"</i>:
            <i class=f>add</i>()
        <i class=k>elif</i> choice <i class=k>==</i> <i class=s>"2"</i>:
            start_date <i class=k>=</i> <i class=f>get_date</i>(<i class=s>"Enter the START date (dd-mm-yyyy): "</i>)
            end_date <i class=k>=</i> <i class=f>get_date</i>(<i class=s>"Enter the END date (dd-mm-yyyy): "</i>)
            df <i class=k>=</i> CSV.<i class=f>get_transactions</i>(start_date, end_date)
            <i class=k>if</i> <i class=f>input</i>(<i class=s>"Do you want to see a plot? (y/n) "</i>).lower() <i class=k>==</i> <i class=s>"y"</i>:
                <i class=f>plot_transactions</i>(df)
        <i class=k>elif</i> choice <i class=k>==</i> <i class=s>"3"</i>:
            <i class=f>print</i>(<i class=s>"\nThank you, have a nice day.\n"</i>)
            <i class=k>break</i>
        <i class=k>else</i>:
            <i class=f>print</i>(<i class=s>"Invalid choice. Enter 1, 2, or 3"</i>)

<i class=k>if</i> __name__ <i class=k>==</i> <i class=s>"__main__"</i>:
    <i class=f>main</i>()</pre></div>

<!-- Terminal text -->
<pre class="term" style="position:absolute;left:1751px;top:124.5px">21-07-2024   140.0  Expense      groceries
22-07-2024    60.0  Expense            gas
23-07-2024   190.0  Expense      utilities
24-07-2024   300.0   Income freelance work
25-07-2024   110.0  Expense     restaurant
26-07-2024    55.0  Expense         coffee
27-07-2024    95.0  Expense  subscriptions
28-07-2024    80.0  Expense          books
29-07-2024   140.0  Expense       clothing
30-07-2024    60.7  Expense        HairCut
14-07-2024    23.0   Income            gym
15-07-2024   500.0  Expense   refrigerator

Summary:
Total Income: $1243.00
Total Expense: $2660.70
Net Savings: $-1417.70
Do you want to see a plot? (y/n) y</pre>
</body></html>
